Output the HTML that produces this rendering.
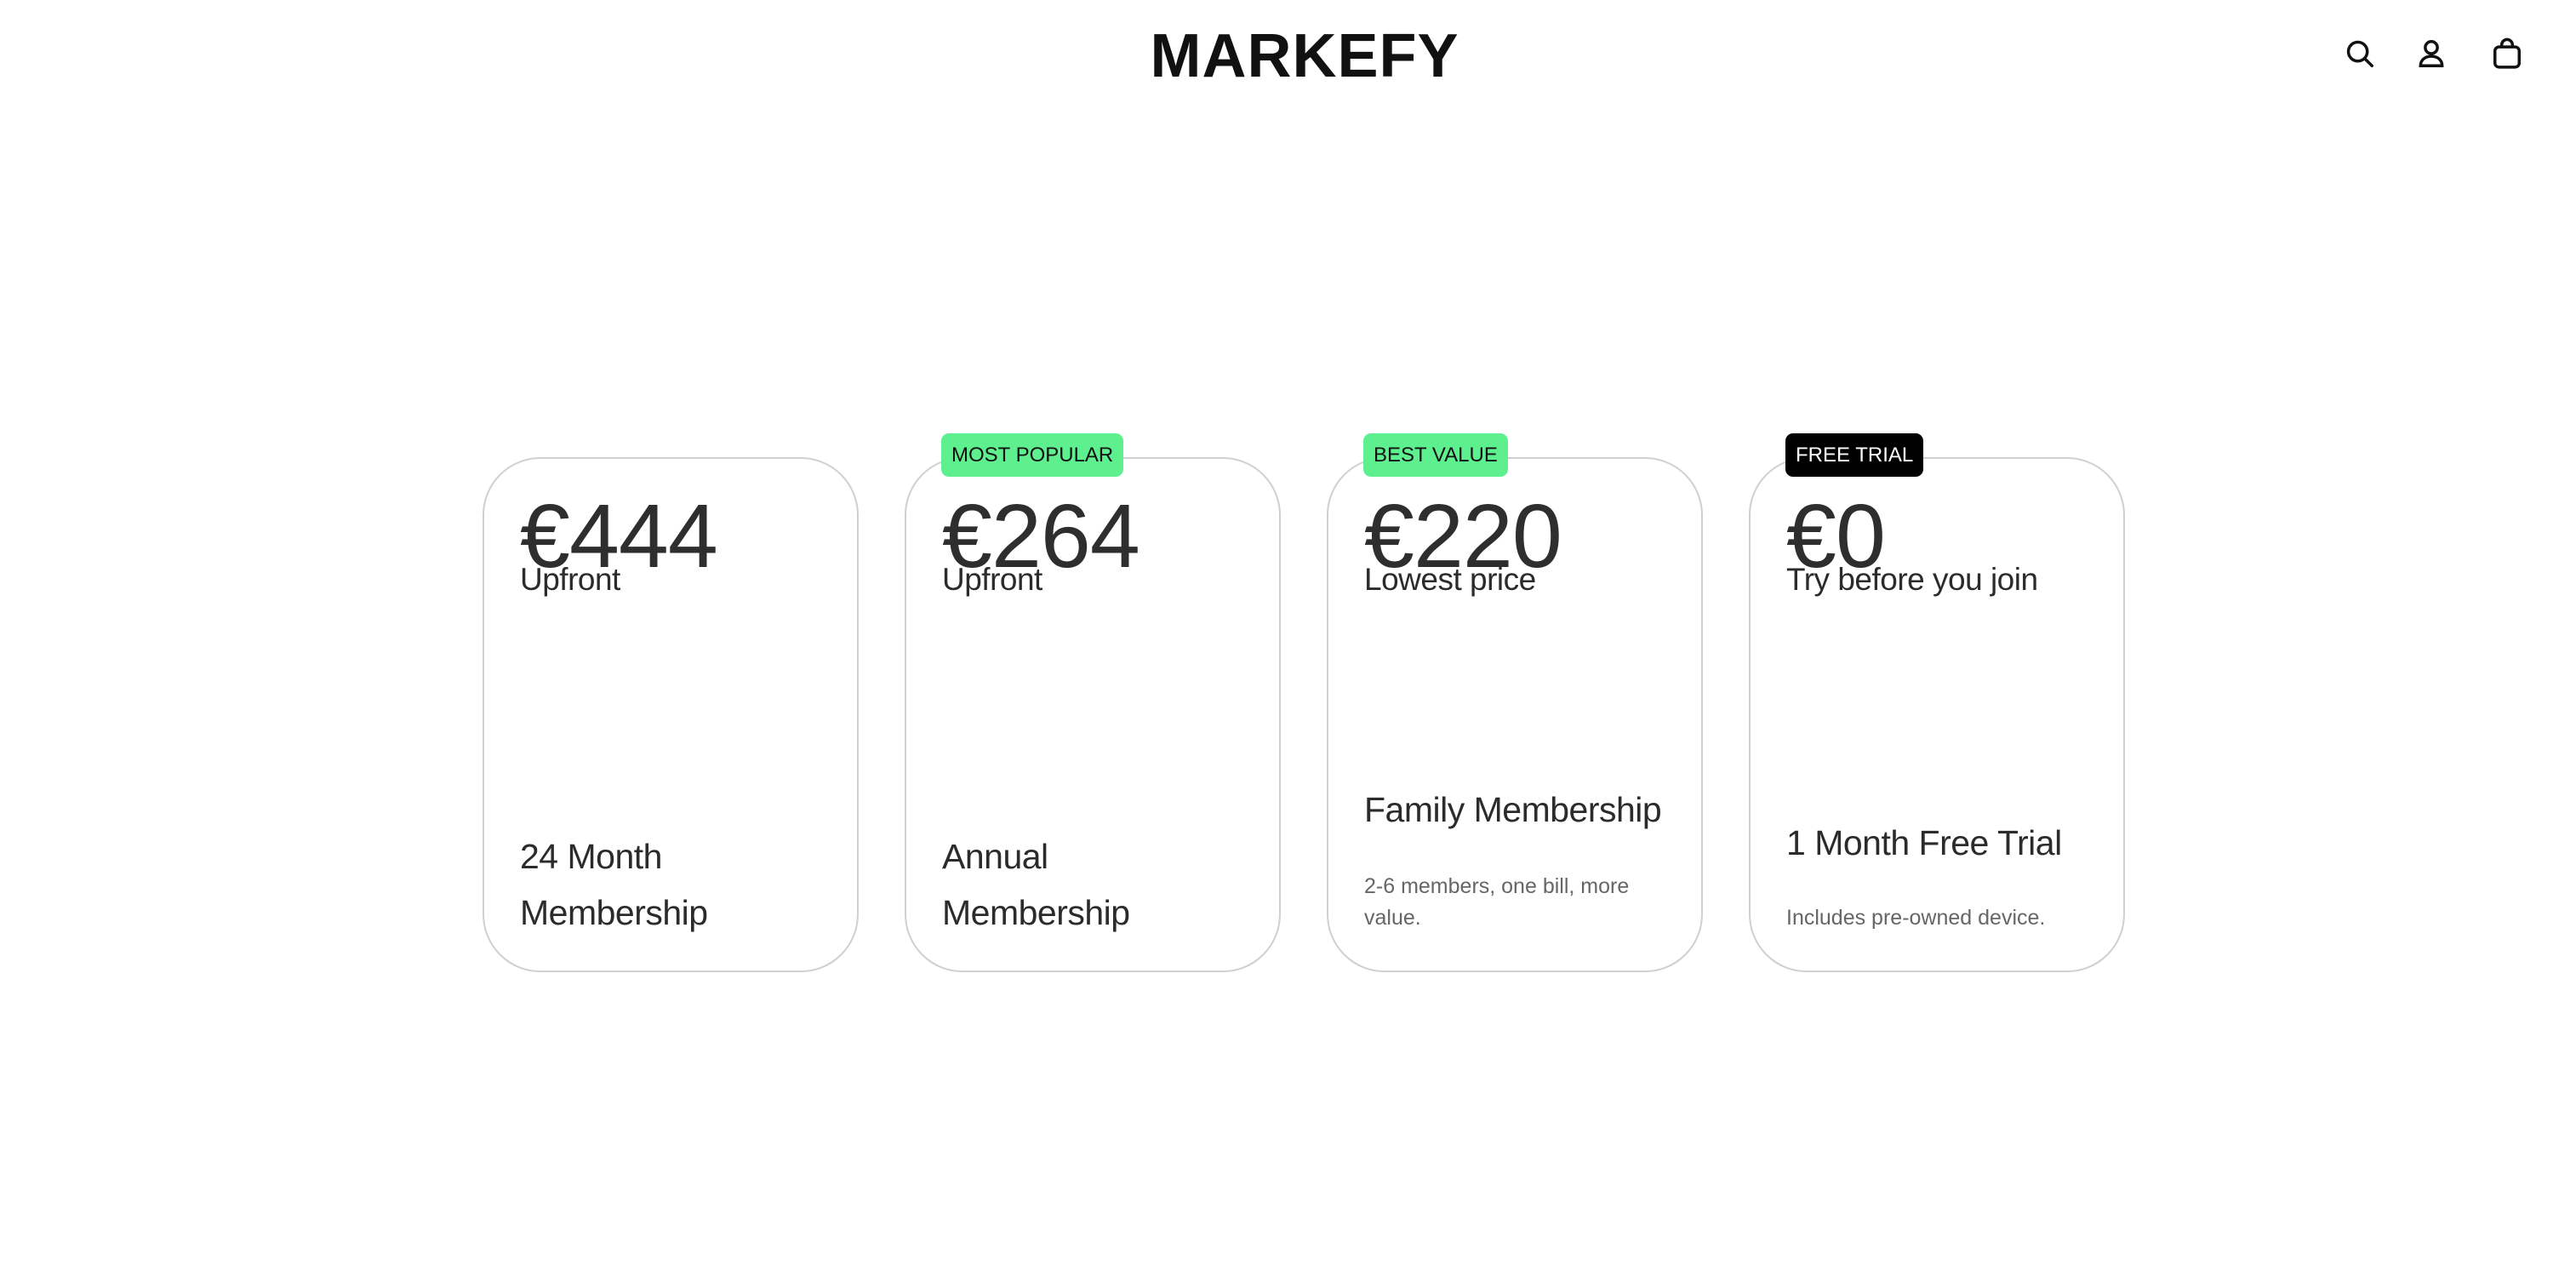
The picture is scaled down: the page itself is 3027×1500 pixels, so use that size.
<!DOCTYPE html>
<html><head><meta charset="utf-8"><style>
html,body{margin:0;padding:0;background:#fff;}
body{width:3027px;height:1500px;position:relative;overflow:hidden;font-family:"Liberation Sans",sans-serif;color:#2b2b2b;}
.logo{position:absolute;left:1340px;top:30px;width:386px;text-align:center;font-size:72px;letter-spacing:1px;color:#111;font-weight:bold;line-height:72px;}
.icon{position:absolute;top:44px;width:38px;height:38px;}
.card{position:absolute;top:537px;width:442px;height:605px;border:2px solid #d0d0d0;border-radius:68px;box-sizing:border-box;}
.price{position:absolute;left:42px;top:38px;font-size:106px;letter-spacing:-1px;line-height:1;color:#2e2e2e;}
.sub{position:absolute;left:42px;top:120px;font-size:37px;letter-spacing:-0.5px;line-height:1.2;}
.title{position:absolute;left:42px;font-size:41px;line-height:66px;letter-spacing:-0.5px;}
.desc{position:absolute;left:42px;font-size:25px;line-height:37px;color:#666;}
.badge{position:absolute;top:-30px;left:41px;height:51px;line-height:51px;padding:0 12px;border-radius:9px;font-size:24px;}
</style></head><body>
<div class="logo">MARKEFY</div>
<svg class="icon" style="left:2754px" viewBox="0 0 24 24" fill="none" stroke="#111" stroke-width="2.2" stroke-linecap="round"><circle cx="10.5" cy="10.5" r="7"/><path d="M16 16l5 5"/></svg>
<svg class="icon" style="left:2838px" viewBox="0 0 24 24" fill="none" stroke="#111" stroke-width="2.2" stroke-linecap="round"><circle cx="12" cy="7.5" r="4.5"/><path d="M4 21c0-4.5 3.5-7 8-7s8 2.5 8 7z"/></svg>
<svg class="icon" style="left:2927px" viewBox="0 0 24 24" fill="none" stroke="#111" stroke-width="2.2" stroke-linejoin="round"><rect x="3" y="7" width="18" height="15" rx="3"/><path d="M8 7V5.5a4 4 0 0 1 8 0V7"/></svg>

<div class="card" style="left:567px">
<div class="price">€444</div><div class="sub">Upfront</div>
<div class="title" style="top:434px">24 Month<br>Membership</div>
</div>
<div class="card" style="left:1063px">
<div class="badge" style="background:#5ef08f;color:#111">MOST POPULAR</div>
<div class="price">€264</div><div class="sub">Upfront</div>
<div class="title" style="top:434px">Annual<br>Membership</div>
</div>
<div class="card" style="left:1559px">
<div class="badge" style="background:#5ef08f;color:#111">BEST VALUE</div>
<div class="price">€220</div><div class="sub">Lowest price</div>
<div class="title" style="top:379px">Family Membership</div>
<div class="desc" style="top:484px">2-6 members, one bill, more<br>value.</div>
</div>
<div class="card" style="left:2055px">
<div class="badge" style="background:#000;color:#fff">FREE TRIAL</div>
<div class="price">€0</div><div class="sub">Try before you join</div>
<div class="title" style="top:418px">1 Month Free Trial</div>
<div class="desc" style="top:521px">Includes pre-owned device.</div>
</div>
</body></html>
